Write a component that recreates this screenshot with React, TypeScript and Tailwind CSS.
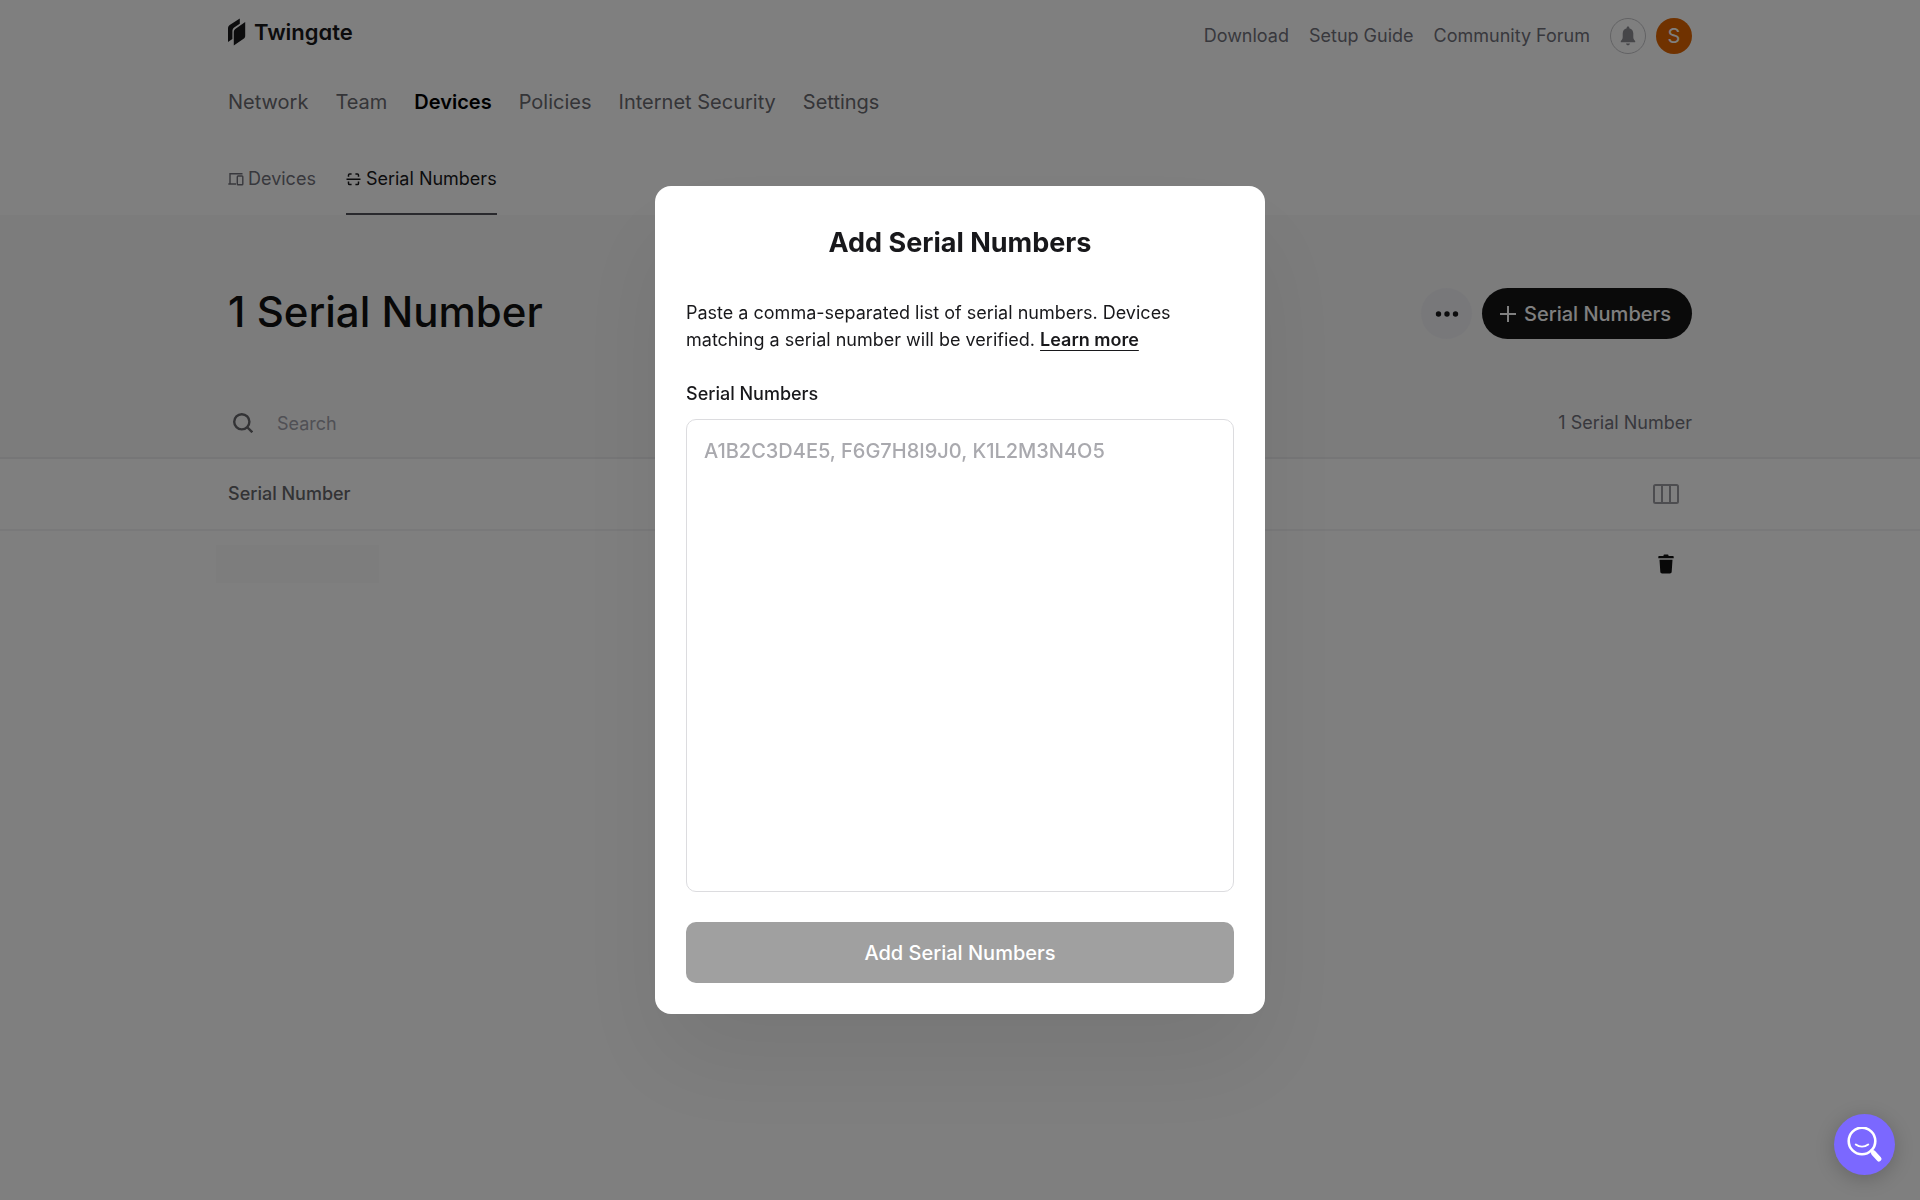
import { useState } from 'react'

// Side gutters shared by every full-width band of the page
const gutterLeft = 'pl-[max(24px,calc(50vw-732px))]'
const gutterRight = 'pr-[max(24px,calc(50vw-732px))]'
const gutter = `${gutterLeft} ${gutterRight}`

const mainNav = ['Network', 'Team', 'Devices', 'Policies', 'Internet Security', 'Settings']
const helpLinks = ['Download', 'Setup Guide', 'Community Forum']

export default function App() {
  return (
    <div className="min-h-screen bg-white font-[Inter,'Liberation_Sans',sans-serif] text-[#18181b]">
      <Header />
      <Toolbar />
      <SerialTable />
      <AddSerialNumbersDialog />
      <HelpButton />
    </div>
  )
}

function Header() {
  return (
    <header className={gutter}>
      <div className="flex items-center justify-between pt-4">
        <a href="#" className="flex items-center gap-2 pb-2">
          <TwingateMark />
          <span className="text-[22px] leading-8 font-semibold [font-feature-settings:'cv11']">Twingate</span>
        </a>
        <div className="flex items-center gap-5">
          {helpLinks.map((label) => (
            <a key={label} href="#" className="text-lg leading-10 text-[#71717a]">{label}</a>
          ))}
          <div className="flex items-center gap-2.5">
            <button aria-label="Notifications" className="flex size-9 items-center justify-center rounded-full border border-[#c4c4c8] text-[#8c8c93]">
              <svg className="size-5" viewBox="0 0 20 20" fill="currentColor">
                <path d="M10 .5c.8 0 1.300.5 1.300 1.200v.6c2.500.6 4 2.600 4 5.200v3.600c0 1.700.5 2.600 1.900 4v1.200H2.800v-1.200c1.400-1.400 1.900-2.300 1.900-4V7.500c0-2.600 1.500-4.600 4-5.200v-.6C8.700 1 9.200.5 10 .5zM8 17.500h4c-.2 1.100-1 1.800-2 1.800s-1.800-.7-2-1.800z" />
              </svg>
            </button>
            <button aria-label="Account" className="flex size-9 items-center justify-center rounded-full bg-[#e06500] text-xl text-white">S</button>
          </div>
        </div>
      </div>

      <nav className="mt-5 flex gap-[27px] text-xl leading-[52px]">
        {mainNav.map((label) => (
          <a key={label} href="#" className={label === 'Devices' ? 'font-semibold text-black' : 'text-[#6a6a70]'}>
            {label}
          </a>
        ))}
      </nav>

      {/* Sub tabs */}
      <nav className="mt-4 flex gap-[30px] text-lg leading-[69px]">
        <a href="#" className="flex items-center gap-1 border-b-2 border-transparent text-[#71717a]">
          <svg className="size-4" viewBox="0 0 16 16" fill="none" stroke="currentColor" strokeWidth="1.4">
            <path d="M14.500 2.700H2V13M.3 13H8" />
            <rect x="9.300" y="5" width="5.500" height="8.700" rx=".8" />
          </svg>
          Devices
        </a>
        <a href="#" className="flex items-center gap-1 border-b-2 border-[#52525b]">
          <svg className="size-4" viewBox="0 0 16 16" fill="none" stroke="currentColor" strokeWidth="1.5">
            <path d="M2.500 5.800V4c0-.7.400-1.100 1.100-1.100h2M9.400 2.900h2c.7 0 1.100.4 1.100 1.100v1.800M2.500 10.600v1.800c0 .7.400 1.100 1.100 1.100h2M9.400 13.500h2c.7 0 1.100-.4 1.100-1.100v-1.800M.5 8.200h14" />
          </svg>
          Serial Numbers
        </a>
      </nav>
    </header>
  )
}

function TwingateMark() {
  return (
    <svg className="h-7 w-[18px]" viewBox="0 0 18 28" fill="currentColor">
      <path d="M0 10.500C0 9 .5 8 1.700 7L11.800.500v5.200L6.500 9.200C5 10.300 4.400 11.500 4.400 13v8L0 24z" />
      <path d="M5.800 14.200c0-1.500.6-2.600 1.800-3.500L17.200 4v13.700c0 1.400-.5 2.300-1.600 3L5.800 27.500z" />
    </svg>
  )
}

function Toolbar() {
  return (
    <section className={`${gutter} border-b-2 border-[#ececee] bg-[#f8f8f9]`}>
      <div className="flex items-start justify-between pt-[73px]">
        <h1 className="text-[42px] leading-[48px] font-medium text-[#111]">1 Serial Number</h1>
        <div className="flex gap-2.5">
          <button aria-label="More actions" className="flex size-[51px] items-center justify-center rounded-full bg-[#f1f1f5]">
            <svg className="size-6" viewBox="0 0 24 24" fill="currentColor">
              <circle cx="3.500" cy="12" r="2.700" />
              <circle cx="12" cy="12" r="2.700" />
              <circle cx="20.500" cy="12" r="2.700" />
            </svg>
          </button>
          <button className="flex h-[51px] items-center gap-2 rounded-full bg-[#141414] pr-[21px] pl-[18px] text-xl font-medium text-white">
            <svg className="size-4" viewBox="0 0 16 16" fill="none" stroke="currentColor" strokeWidth="2">
              <path d="M8 0v16M0 8h16" />
            </svg>
            Serial Numbers
          </button>
        </div>
      </div>
      <div className="flex items-center justify-between pt-[69px] pb-[19px] text-lg">
        <label className="flex items-center gap-6 pl-[5px]">
          <svg className="size-5 text-[#66666b]" viewBox="0 0 20 20" fill="none" stroke="currentColor" strokeWidth="2.4">
            <circle cx="8.800" cy="8.800" r="7.600" />
            <path d="M14 14l5.300 5.300" />
          </svg>
          <input
            type="text"
            aria-label="Search"
            placeholder="Search"
            className="h-[30px] w-72 bg-transparent placeholder-[#a1a1aa] outline-none"
          />
        </label>
        <p className="text-[#71717a]">1 Serial Number</p>
      </div>
    </section>
  )
}

function SerialTable() {
  return (
    <table className="w-full text-left">
      <thead>
        <tr className="h-[71px] border-b-2 border-[#f3f3f5]">
          <th className={`${gutterLeft} text-lg font-medium text-[#66666b]`}>Serial Number</th>
          <th className={gutterRight}>
            <button aria-label="Choose columns" className="mr-[13px] ml-auto block text-[#9b9ba1]">
              <svg className="h-5 w-[26px]" viewBox="0 0 26 20" fill="none" stroke="currentColor" strokeWidth="2">
                <rect x="1" y="1" width="24" height="18" rx="1.500" />
                <path d="M9 1v18M17 1v18" />
              </svg>
            </button>
          </th>
        </tr>
      </thead>
      <tbody>
        <tr className="h-[66px]">
          <td className={gutterLeft}>
            <div className="-ml-3 h-[38px] w-[163px] bg-[#fbfbfb]" />
          </td>
          <td className={gutterRight}>
            <button aria-label="Delete serial number" className="mr-[18px] ml-auto block text-[#111]">
              <svg className="h-5 w-4" viewBox="0 0 16 20" fill="currentColor">
                <path d="M5.500 1.300c0-.5.300-.8.800-.8h3.400c.5 0 .8.300.8.800v.8h4.500c.400 0 .7.300.7.700v1.400H.3V2.800c0-.4.300-.7.700-.7h4.500zM1.500 5.800h13l-.8 12c-.1 1-.8 1.700-1.800 1.700H4.100c-1 0-1.700-.7-1.800-1.700z" />
              </svg>
            </button>
          </td>
        </tr>
      </tbody>
    </table>
  )
}

function AddSerialNumbersDialog() {
  const [value, setValue] = useState('')

  return (
    <div className="fixed inset-0 flex items-center justify-center bg-black/50">
      <form
        role="dialog"
        aria-labelledby="dialog-title"
        className="w-[610px] max-w-full rounded-2xl bg-white px-[31px] pt-[37px] pb-[31px] shadow-[0_50px_100px_rgba(0,0,0,0.07)]"
      >
        <h2 id="dialog-title" className="text-center text-[27px] leading-10 font-bold">Add Serial Numbers</h2>
        <p className="mt-9 text-lg leading-[27px]">
          Paste a comma-separated list of serial numbers. Devices matching a serial number will be verified.{' '}
          <a href="#" className="font-semibold underline decoration-1 underline-offset-4">Learn more</a>
        </p>
        <label htmlFor="serials" className="mt-[27px] block text-lg leading-[27px] font-medium">Serial Numbers</label>
        <textarea
          id="serials"
          value={value}
          onChange={(e) => setValue(e.target.value)}
          placeholder="A1B2C3D4E5, F6G7H8I9J0, K1L2M3N4O5"
          className="mt-3 block h-[473px] w-full resize-none rounded-[10px] border border-[#dcdcdf] px-[17px] py-4 text-xl leading-[30px] font-medium placeholder-[#a9a9ae] outline-none"
        />
        <button
          type="submit"
          disabled={!value}
          className="mt-[30px] h-[61px] w-full rounded-[10px] bg-[#111] text-xl font-medium text-white disabled:bg-[#a0a0a0]"
        >
          Add Serial Numbers
        </button>
      </form>
    </div>
  )
}

function HelpButton() {
  return (
    <button
      aria-label="Search help"
      className="fixed right-[25px] bottom-[25px] flex size-[61px] items-center justify-center rounded-full bg-[#7b68ff] text-white shadow-[0_4px_20px_rgba(0,0,0,0.2)]"
    >
      <svg className="size-9" viewBox="0 0 36 36" fill="none" stroke="currentColor" strokeLinecap="round">
        <circle cx="15" cy="14" r="13.300" strokeWidth="2.6" />
        <path d="M8.800 17.500c3.700 2.700 8.700 2.700 12.400 0" strokeWidth="2" />
        <path d="M24.500 23.500l2 2" strokeWidth="3" />
        <path d="M26.500 26l5.500 6" strokeWidth="5" />
      </svg>
    </button>
  )
}
